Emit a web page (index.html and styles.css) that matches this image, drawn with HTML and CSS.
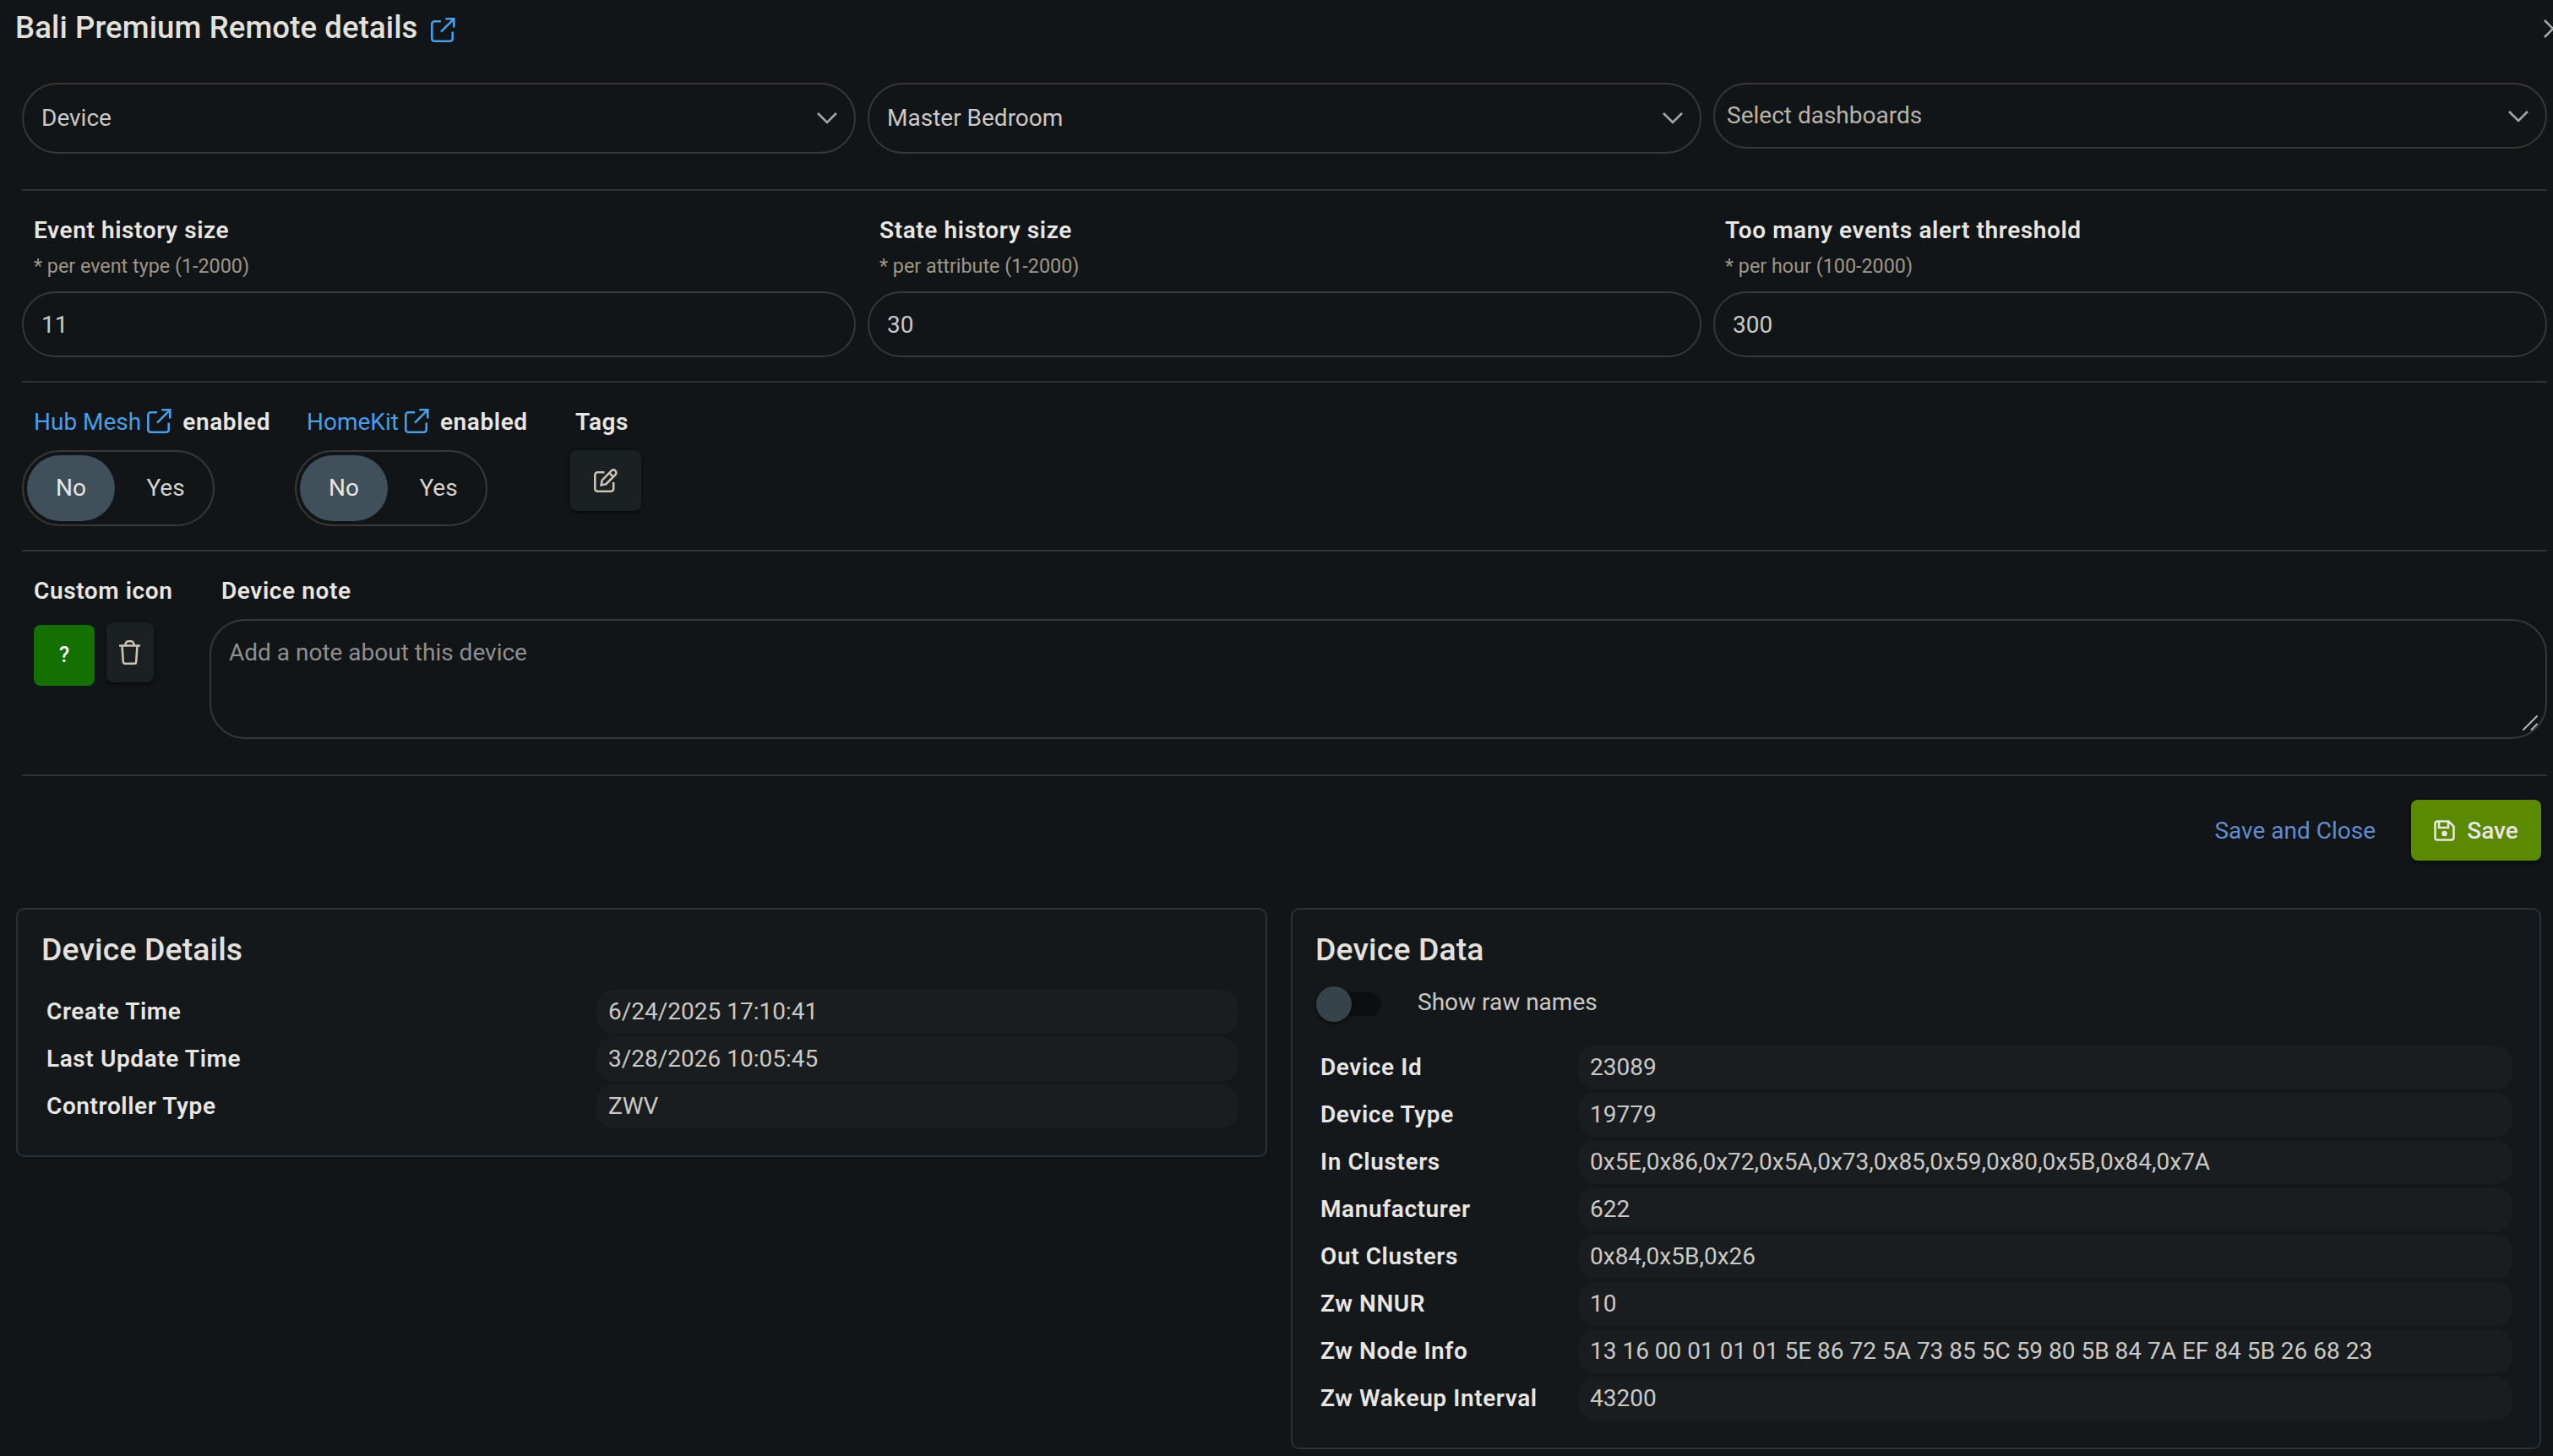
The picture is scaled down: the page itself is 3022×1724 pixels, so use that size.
FILE: index.html
```html
<!DOCTYPE html>
<html lang="en">
<head>
<meta charset="utf-8">
<title>Bali Premium Remote details</title>
<link rel="stylesheet" href="styles.css">
</head>
<body>
<svg class="sprite" aria-hidden="true">
  <symbol id="external" viewBox="0 0 29 29"><path d="M12 4.300H4.300A3 3 0 0 0 1.300 7.300V24.700A3 3 0 0 0 4.300 27.700H22.700A3 3 0 0 0 25.700 24.700V16.500M17.300 1.300H27.300V11.500M27 1.700 12 16.700"/></symbol>
  <symbol id="chevron" viewBox="0 0 26 16"><path d="M2 2 13 13 24 2"/></symbol>
</svg>
<header class="header">
  <h1 class="title">Bali Premium Remote details</h1>
  <svg class="icon-link title-icon"><use href="#external"/></svg>
  <svg class="close" viewBox="0 0 22 22"><path d="M1 1 21 21M21 1 1 21"/></svg>
</header>
<main class="form">
  <section class="row selects">
    <div class="field select">Device<svg class="chevron"><use href="#chevron"/></svg></div>
    <div class="field select">Master Bedroom<svg class="chevron"><use href="#chevron"/></svg></div>
    <div class="field select multi">Select dashboards<svg class="chevron"><use href="#chevron"/></svg></div>
  </section>
  <section class="row limits">
    <div class="limit"><span class="label">Event history size</span><span class="hint">* per event type (1-2000)</span><div class="field">11</div></div>
    <div class="limit"><span class="label">State history size</span><span class="hint">* per attribute (1-2000)</span><div class="field">30</div></div>
    <div class="limit"><span class="label">Too many events alert threshold</span><span class="hint">* per hour (100-2000)</span><div class="field">300</div></div>
  </section>
  <section class="options">
    <div class="option mesh">
      <div class="label"><a class="link">Hub Mesh</a><svg class="icon-link"><use href="#external"/></svg><span>enabled</span></div>
      <div class="switch"><span class="on">No</span><span>Yes</span></div>
    </div>
    <div class="option homekit">
      <div class="label"><a class="link">HomeKit</a><svg class="icon-link"><use href="#external"/></svg><span>enabled</span></div>
      <div class="switch"><span class="on">No</span><span>Yes</span></div>
    </div>
    <div class="option tags">
      <div class="label">Tags</div>
      <button class="button edit"><svg class="icon-edit" viewBox="0 0 28 28"><path d="M12.500 4.300H4.300A3 3 0 0 0 1.300 7.300V23.700A3 3 0 0 0 4.300 26.700H20.200A3 3 0 0 0 23.200 23.700V16M8.600 19.400 9.700 13.600 20.800 2.400A2.900 2.900 0 0 1 25.500 7L14.300 18.200ZM18.300 5 22.900 9.600"/></svg></button>
    </div>
  </section>
  <section class="notes">
    <div class="custom">
      <div class="label">Custom icon</div>
      <div class="custom-row">
        <button class="button unknown">?</button>
        <button class="button trash"><svg class="icon-trash" viewBox="0 0 25 29"><path d="M0 6.500H25M3.500 6.500 4.800 25.500A2.200 2.200 0 0 0 7 27.700H18A2.200 2.200 0 0 0 20.200 25.500L21.500 6.500M7 6.500 8 3.500A3 3 0 0 1 10.500 1.300H14.500A3 3 0 0 1 17 3.500L18 6.500"/></svg></button>
      </div>
    </div>
    <div class="note">
      <div class="label">Device note</div>
      <div class="textarea">Add a note about this device<svg class="grip" viewBox="0 0 20 20"><path d="M1.500 18.500 18.500 1.500M11 18.500 18.500 11"/></svg></div>
    </div>
  </section>
</main>
<div class="actions">
  <a class="save-close">Save and Close</a>
  <button class="save"><svg class="icon-save" viewBox="0 0 25 25"><path d="M4 1.500H17.500L23.500 7.500V21A2.500 2.500 0 0 1 21 23.500H4A2.500 2.500 0 0 1 1.500 21V4A2.500 2.500 0 0 1 4 1.500ZM6 2V9H17V2"/><circle cx="12.500" cy="16" r="3.300"/></svg><span class="save-text">Save</span></button>
</div>
<div class="cards">
  <section class="card details">
    <h2>Device Details</h2>
    <dl class="table">
      <dt>Create Time</dt><dd>6/24/2025 17:10:41</dd>
      <dt>Last Update Time</dt><dd>3/28/2026 10:05:45</dd>
      <dt>Controller Type</dt><dd>ZWV</dd>
    </dl>
  </section>
  <section class="card data">
    <h2>Device Data</h2>
    <div class="raw"><span class="track"><span class="thumb"></span></span>Show raw names</div>
    <dl class="table">
      <dt>Device Id</dt><dd>23089</dd>
      <dt>Device Type</dt><dd>19779</dd>
      <dt>In Clusters</dt><dd>0x5E,0x86,0x72,0x5A,0x73,0x85,0x59,0x80,0x5B,0x84,0x7A</dd>
      <dt>Manufacturer</dt><dd>622</dd>
      <dt>Out Clusters</dt><dd>0x84,0x5B,0x26</dd>
      <dt>Zw NNUR</dt><dd>10</dd>
      <dt>Zw Node Info</dt><dd>13 16 00 01 01 01 5E 86 72 5A 73 85 5C 59 80 5B 84 7A EF 84 5B 26 68 23</dd>
      <dt>Zw Wakeup Interval</dt><dd>43200</dd>
    </dl>
  </section>
</div>
</body>
</html>
```
FILE: styles.css
```css
* { box-sizing: border-box; }
html { overflow: hidden; }
body {
  margin: 0;
  width: 3022px;
  height: 1724px;
  overflow: hidden;
  background: #111518;
  color: #e4e1dc;
  font: 400 28px/32px Roboto, sans-serif;
}
svg { flex: none; fill: none; stroke: currentColor; stroke-width: 2.600; }
h1, h2, dl, dd { margin: 0; }
button { border: 0; font: inherit; color: inherit; padding: 0; }
.sprite { position: absolute; width: 0; height: 0; }

.header { display: flex; height: 98px; padding-left: 18px; }
.title { font-size: 36.500px; line-height: 42px; font-weight: 500; letter-spacing: 0.120px; margin-top: 12px; }
.icon-link { width: 29px; height: 29px; color: #479fe8; }
.title-icon { margin: 21px 0 0 16px; }
.close { width: 22px; height: 22px; margin: 23px -11px 0 auto; color: #a9a9a9; }

.form { margin: 0 7px 0 26px; }
.row { display: grid; grid-template-columns: repeat(3, 1fr); column-gap: 14px; align-items: start; border-bottom: 2px solid #2b343a; }
.selects { height: 128px; }
.field { height: 78px; border: 2px solid #393733; border-radius: 40px; padding: 0 21px; line-height: 76px; color: #cbc9c5; }
.select { display: flex; height: 84px; line-height: 80px; border-radius: 42px; justify-content: space-between; align-items: center; padding-right: 19px; }
.multi { height: 78px; line-height: 74px; padding: 0 19px 0 14px; color: #bab3a8; border-radius: 40px; }
.multi .chevron { margin-top: 2px; }
.chevron { width: 26px; height: 16px; color: #a5a5a5; }
.limits { height: 227px; padding-top: 31px; }
.limit { display: flex; flex-direction: column; }
.label, dt { font-weight: 600; letter-spacing: 0.600px; color: #e8e6e3; white-space: nowrap; }
.label { line-height: 32px; padding-left: 14px; }
.hint { font-size: 23.330px; line-height: 28px; margin: 12px 0 16px; padding-left: 14px; color: #9e9587; }

.options { display: flex; height: 200px; padding-top: 31px; border-bottom: 2px solid #2b343a; }
.option .label { display: flex; height: 49px; }
.option { width: 323px; }
.link { font-weight: 400; letter-spacing: 0; color: #479fe8; }
.label .icon-link { margin: 0 13px 0 7px; }
.switch { display: flex; gap: 8px; width: 228px; height: 90px; padding: 4px; border: 2px solid #393733; border-radius: 45px; }
.switch span { flex: none; width: 104px; height: 78px; text-align: center; line-height: 78px; border-radius: 39px; color: #d6d3cd; }
.switch .on { background: #40505a; color: #e8e6e3; }
.tags { margin-left: 3px; }
.tags .label { padding-left: 6px; }
.button { display: flex; align-items: center; justify-content: center; border-radius: 8px; background: #1b2023; color: #cbc2b5; box-shadow: 0 2px 4px #0008; }
.edit { width: 84px; height: 72px; }
.icon-edit { width: 28px; height: 28px; }

.notes { display: flex; height: 266px; padding-top: 31px; border-bottom: 2px solid #2b343a; }
.custom { width: 222px; }
.custom-row { display: flex; gap: 14px; margin: 21px 0 0 14px; }
.unknown { width: 72px; height: 72px; margin-top: 3px; background: #147000; color: #fff; font-size: 25px; font-weight: 500; box-shadow: none; }
.trash { width: 56px; height: 71px; }
.icon-trash { width: 25px; height: 29px; margin-right: 1px; }
.note { flex: 1; }
.textarea { position: relative; height: 142px; margin-top: 17px; padding: 22px 21px; border: 2px solid #393733; border-radius: 42px; color: #8f8f8d; }
.grip { position: absolute; right: 8px; bottom: 7px; width: 20px; height: 20px; color: #b5b5b5; stroke-width: 2; }

.actions { display: flex; justify-content: flex-end; align-items: center; gap: 42px; height: 72px; margin: 28px 14px 56px; }
.save-close { color: #648ccb; padding-top: 2px; }
.save { display: flex; align-items: center; justify-content: center; gap: 14px; width: 154px; height: 72px; border-radius: 8px; background: #5c8902; color: #e8e6e3; font-weight: 500; box-shadow: 0 2px 4px #0008; }
.save-text { padding-top: 2px; }
.icon-save { width: 25px; height: 25px; }
.icon-save circle { fill: currentColor; stroke: none; }

.cards { display: grid; grid-template-columns: 1481px 1480px; justify-content: space-between; align-items: start; margin: 0 14px 0 19px; }
.card { border: 2px solid #2a3237; border-radius: 10px; background: #14181b; padding: 25px 32px 0 28px; }
.details { height: 295px; }
.data { height: 641px; padding: 25px 32px 0 27px; }
h2 { font-size: 37.330px; line-height: 44px; font-weight: 500; letter-spacing: 0.150px; margin-bottom: 26px; }
.table { display: grid; grid-template-columns: 657px 1fr; row-gap: 4px; }
dt { line-height: 52px; padding-left: 6px; }
dd { height: 52px; line-height: 52px; padding-left: 14px; border-radius: 20px; background: #191d20; color: #cbc9c5; }
.data h2 { margin-bottom: 22px; }
.data .table { grid-template-columns: 311px 1fr; }
.raw { display: flex; height: 70px; line-height: 38px; color: #cbc9c5; }
.track { width: 72px; height: 28px; margin: 7px 43px 0 6px; border-radius: 14px; background: #0c0f11; }
.thumb { display: block; width: 42px; height: 42px; margin: -7px 0 0 -5px; border-radius: 50%; background: #36434b; box-shadow: 0 2px 4px #0008; }
```
